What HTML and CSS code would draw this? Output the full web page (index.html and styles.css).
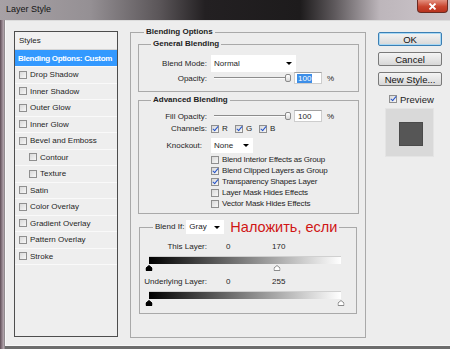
FILE: index.html
```html
<!DOCTYPE html>
<html lang="en">
<head>
    <meta charset="UTF-8">
    <meta name="viewport" content="width=device-width, initial-scale=1.0">
    <title>Layer Style</title>
    <link rel="stylesheet" href="styles.css">
</head>
<body>
    <div class="window">
        <div class="titlebar">
            <span class="title">Layer Style</span>
            <span class="close">
                <svg width="9" height="7" viewBox="0 0 9 7"><path d="M1.5 0.5 L7.5 6.5 M7.5 0.5 L1.5 6.5" stroke="#fff" stroke-width="1.8"/></svg>
            </span>
        </div>
        <div class="frame">
            <div class="dialog">
                <ul class="styles">
                    <li class="styles-head">Styles</li>
                    <li class="selected">Blending Options: Custom</li>
                    <li><span class="cb"></span>Drop Shadow</li>
                    <li><span class="cb"></span>Inner Shadow</li>
                    <li><span class="cb"></span>Outer Glow</li>
                    <li><span class="cb"></span>Inner Glow</li>
                    <li><span class="cb"></span>Bevel and Emboss</li>
                    <li class="sub"><span class="cb"></span>Contour</li>
                    <li class="sub"><span class="cb"></span>Texture</li>
                    <li><span class="cb"></span>Satin</li>
                    <li><span class="cb"></span>Color Overlay</li>
                    <li><span class="cb"></span>Gradient Overlay</li>
                    <li><span class="cb"></span>Pattern Overlay</li>
                    <li><span class="cb"></span>Stroke</li>
                </ul>

                <fieldset class="group main">
                    <legend>Blending Options</legend>

                    <fieldset class="group general">
                        <legend>General Blending</legend>
                        <div class="row row-select">
                            <label>Blend Mode:</label>
                            <div class="select blend-mode">Normal<span class="arrow"></span></div>
                        </div>
                        <div class="row">
                            <label>Opacity:</label>
                            <div class="slider-field">
                                <div class="slider"><span class="track"></span><span class="thumb"></span></div>
                                <span class="num"><span class="sel">100</span></span>
                                <span class="pct">%</span>
                            </div>
                        </div>
                    </fieldset>

                    <fieldset class="group advanced">
                        <legend>Advanced Blending</legend>
                        <div class="row">
                            <label>Fill Opacity:</label>
                            <div class="slider-field">
                                <div class="slider"><span class="track"></span><span class="thumb"></span></div>
                                <span class="num">100</span>
                                <span class="pct">%</span>
                            </div>
                        </div>
                        <div class="row row-channels">
                            <label>Channels:</label>
                            <div class="channels">
                                <span class="channel"><span class="cb on"></span>R</span>
                                <span class="channel"><span class="cb on"></span>G</span>
                                <span class="channel"><span class="cb on"></span>B</span>
                            </div>
                        </div>
                        <div class="row row-knockout">
                            <label class="short">Knockout:</label>
                            <div class="select knockout">None<span class="arrow"></span></div>
                        </div>
                        <div class="row row-checks">
                            <span></span>
                            <ul class="checks">
                                <li><span class="cb"></span>Blend Interior Effects as Group</li>
                                <li><span class="cb on"></span>Blend Clipped Layers as Group</li>
                                <li><span class="cb on"></span>Transparency Shapes Layer</li>
                                <li><span class="cb"></span>Layer Mask Hides Effects</li>
                                <li><span class="cb"></span>Vector Mask Hides Effects</li>
                            </ul>
                        </div>
                    </fieldset>

                    <fieldset class="group blend-if">
                        <legend>
                            <span class="blend-label">Blend If:</span>
                            <span class="select gray">Gray<span class="arrow"></span></span>
                            <span class="note">Наложить, если</span>
                        </legend>
                        <div class="range-row">
                            <span class="range-label">This Layer:</span>
                            <span class="range-val low">0</span>
                            <span class="range-val">170</span>
                        </div>
                        <div class="gradient-bar"></div>
                        <div class="markers">
                            <span class="marker" style="left: 0%"><svg width="7" height="6" viewBox="0 0 7 6"><path d="M3.5 0.5 L6.5 3 V5.5 H0.5 V3 Z" fill="#000" stroke="#000"/></svg></span>
                            <span class="marker" style="left: 66.7%"><svg width="7" height="6" viewBox="0 0 7 6"><path d="M3.5 0.5 L6.5 3 V5.5 H0.5 V3 Z" fill="#fff" stroke="#8a8a8a"/></svg></span>
                        </div>
                        <div class="range-row">
                            <span class="range-label">Underlying Layer:</span>
                            <span class="range-val low">0</span>
                            <span class="range-val">255</span>
                        </div>
                        <div class="gradient-bar"></div>
                        <div class="markers">
                            <span class="marker" style="left: 0%"><svg width="7" height="6" viewBox="0 0 7 6"><path d="M3.5 0.5 L6.5 3 V5.5 H0.5 V3 Z" fill="#000" stroke="#000"/></svg></span>
                            <span class="marker" style="left: 100%"><svg width="7" height="6" viewBox="0 0 7 6"><path d="M3.5 0.5 L6.5 3 V5.5 H0.5 V3 Z" fill="#fff" stroke="#8a8a8a"/></svg></span>
                        </div>
                    </fieldset>
                </fieldset>

                <div class="actions">
                    <button class="btn default">OK</button>
                    <button class="btn">Cancel</button>
                    <button class="btn">New Style...</button>
                    <div class="preview-check"><span class="cb on"></span>Preview</div>
                    <div class="swatch"><span class="swatch-inner"></span></div>
                </div>
            </div>
        </div>
    </div>
</body>
</html>
```

FILE: styles.css
```css
* {
    margin: 0;
    padding: 0;
    box-sizing: border-box;
}
body {
    width: 450px;
    height: 349px;
    overflow: hidden;
    font-family: "Liberation Sans", Arial, sans-serif;
    font-size: 8px;
    color: #1e1e1e;
    background: #6b6b6b;
}
.window {
    width: 450px;
    height: 349px;
    display: flex;
    flex-direction: column;
}
.titlebar {
    height: 20px;
    display: flex;
    justify-content: space-between;
    align-items: flex-start;
    background: linear-gradient(to right, #a7a1a5 0, #959094 90px, #5a5558 160px, #232022 205px, #1d1b1c 300px, #5f5a5d 335px, #bdb6bb 380px, #cdc6cb 450px);
}
.title {
    font-size: 9px;
    line-height: 19px;
    padding-left: 6px;
    color: #141414;
}
.close {
    width: 31px;
    height: 13px;
    margin-right: 2px;
    display: flex;
    align-items: center;
    justify-content: center;
    background: linear-gradient(#e3907f, #c9452f 55%, #b8321f);
    border: 1px solid #6b2a22;
    border-top: none;
    border-radius: 0 0 4px 4px;
}
.frame {
    flex: 1;
    padding: 0 0 3px 5px;
    background: linear-gradient(to right, #5d4c55 0, #8f7f88 2px, #b7aab1 4px, #6c6c6c 5px);
}
.dialog {
    height: 100%;
    background: #ededed;
    border-left: 1px solid #f7f7f7;
    border-top: 1px solid #dcdcdc;
    border-bottom: 1px solid #f7f7f7;
    display: flex;
    align-items: flex-start;
    padding: 10px 0 0 8px;
}

/* styles list */
.styles {
    list-style: none;
    width: 104px;
    height: 306px;
    border: 1px solid #4d4d4d;
    background: #eeeeee;
}
.styles li {
    height: 16.5px;
    display: flex;
    align-items: center;
    padding-left: 4px;
    border-bottom: 1px solid #f9f9f9;
    white-space: nowrap;
}
.styles .styles-head {
    height: 18px;
    border-bottom: 1px solid #d6d6d6;
    background: #f1f1f1;
}
.styles .selected {
    height: 17px;
    background: #3399ff;
    color: #fff;
    font-weight: bold;
    letter-spacing: -0.3px;
    padding-left: 3px;
}
.styles .sub {
    padding-left: 14px;
}
.styles .cb {
    margin-right: 3px;
}

/* checkbox */
.cb {
    position: relative;
    display: inline-block;
    flex: none;
    width: 8px;
    height: 8px;
    border: 1px solid #8f8f8f;
    background: linear-gradient(135deg, #d9d9d9, #f7f7f7);
}
.cb.on::after {
    content: "";
    position: absolute;
    left: 2px;
    top: -1px;
    width: 2px;
    height: 5px;
    border: solid #2553c9;
    border-width: 0 1.5px 1.5px 0;
    transform: rotate(40deg);
}

/* groups */
.group {
    border: 1px solid #a9a9a9;
}
.group legend {
    font-weight: bold;
    line-height: 10px;
    padding: 0 2px;
    color: #222;
}
.main {
    width: 236px;
    height: 311px;
    margin: -4px 0 0 12px;
    padding: 2px 6px 0 7px;
}
.main > legend {
    margin-left: 6px;
}
.general > legend,
.advanced > legend {
    margin-left: 12px;
}
.general {
    height: 53px;
    padding-top: 5px;
}
.advanced {
    margin-top: 3px;
    padding: 5px 0 4px;
}
.row {
    display: grid;
    grid-template-columns: 68px 1fr;
    column-gap: 4px;
    align-items: center;
    height: 12px;
}
.row label {
    text-align: right;
    white-space: nowrap;
}
.row label.short {
    padding-right: 5px;
}
.row-select {
    height: 18px;
}
.row-channels {
    height: 11px;
    margin-top: 1px;
}
.row-knockout {
    height: 15px;
    margin-top: 4px;
}
.row-checks {
    height: auto;
    margin-top: 1px;
    align-items: start;
}

/* controls */
.select {
    display: flex;
    align-items: center;
    background: #fff;
    padding-left: 3px;
}
.arrow {
    margin-left: auto;
    margin-right: 4px;
    width: 0;
    height: 0;
    border-left: 3px solid transparent;
    border-right: 3px solid transparent;
    border-top: 3px solid #000;
}
.blend-mode {
    width: 85px;
    height: 17px;
}
.knockout {
    width: 42px;
    height: 15px;
}
.slider-field {
    display: flex;
    align-items: center;
}
.slider {
    width: 80px;
    display: flex;
    align-items: center;
    padding-left: 3px;
}
.track {
    flex: 1;
    height: 2px;
    border-top: 1px solid #8c8c8c;
    border-bottom: 1px solid #fafafa;
}
.thumb {
    width: 6px;
    height: 8px;
    border: 1px solid #8a8a8a;
    border-radius: 2px;
    background: linear-gradient(#ffffff, #d8d8d8);
}
.num {
    width: 28px;
    height: 12px;
    margin-left: 3px;
    padding-left: 3px;
    display: flex;
    align-items: center;
    background: #fff;
    border: 1px solid #cdcdcd;
    border-top-color: #a3a3a3;
}
.num .sel {
    background: #3d8ee8;
    color: #fff;
    padding: 0 1px;
    margin-left: -1px;
}
.pct {
    margin-left: 5px;
}
.channels {
    display: flex;
    align-items: center;
}
.channel {
    display: inline-flex;
    align-items: center;
    width: 24px;
}
.channel .cb {
    margin-right: 3px;
}
.checks {
    list-style: none;
}
.checks li {
    height: 11px;
    display: flex;
    align-items: center;
    white-space: nowrap;
    letter-spacing: -0.2px;
}
.checks .cb {
    margin-right: 3px;
}

/* blend if */
.blend-if {
    margin: 5px 2px 0 1px;
    padding-bottom: 7px;
}
.blend-if > legend {
    display: flex;
    align-items: center;
    margin-left: 13px;
    font-weight: normal;
    line-height: 16px;
}
.blend-label {
    margin-right: 2px;
}
.gray {
    width: 38px;
    height: 14px;
}
.note {
    margin-left: 6px;
    font-size: 14.5px;
    color: #d01515;
}
.range-row {
    display: flex;
    align-items: center;
    height: 10px;
    margin-top: 6px;
}
.range-label {
    width: 67px;
    text-align: right;
    white-space: nowrap;
}
.range-val {
    width: 46px;
}
.range-val.low {
    margin-left: 19px;
}
.range-row + .gradient-bar {
    margin-top: 5px;
}
.gradient-bar {
    width: 192px;
    height: 8px;
    margin-left: 9px;
    background: linear-gradient(to right, #000, #fff);
    border-top: 1px solid #d0d0d0;
}
.markers {
    position: relative;
    width: 192px;
    height: 6px;
    margin: 1px 0 0 9px;
}
.markers + .range-row {
    margin-top: 5px;
}
.marker {
    position: absolute;
    top: 0;
    transform: translateX(-50%);
    display: flex;
}

/* right column */
.actions {
    width: 64px;
    margin: 1px 0 0 12px;
    display: flex;
    flex-direction: column;
}
.btn {
    height: 14px;
    font-family: "Liberation Sans", Arial, sans-serif;
    font-size: 9.5px;
    color: #111;
    background: linear-gradient(#f4f4f4, #e6e6e6 50%, #d7d7d7);
    border: 1px solid #7a7a7a;
    border-radius: 2px;
    margin-bottom: 6px;
}
.btn.default {
    border-color: #3b7fb4;
    box-shadow: inset 0 0 0 1px #a8d8f4;
}
.preview-check {
    display: flex;
    align-items: center;
    height: 10px;
    margin-top: 2px;
    padding-left: 11px;
    font-size: 9.5px;
}
.preview-check .cb {
    margin-right: 3px;
}
.swatch {
    width: 49px;
    height: 49px;
    margin: 4px 0 0 7px;
    padding: 13px 0 0 13px;
    background: #d9d9d9;
    border: 1px solid #e4e4e4;
}
.swatch-inner {
    display: block;
    width: 24px;
    height: 24px;
    background: #565656;
    border: 1px solid #4a4a4a;
}
```
